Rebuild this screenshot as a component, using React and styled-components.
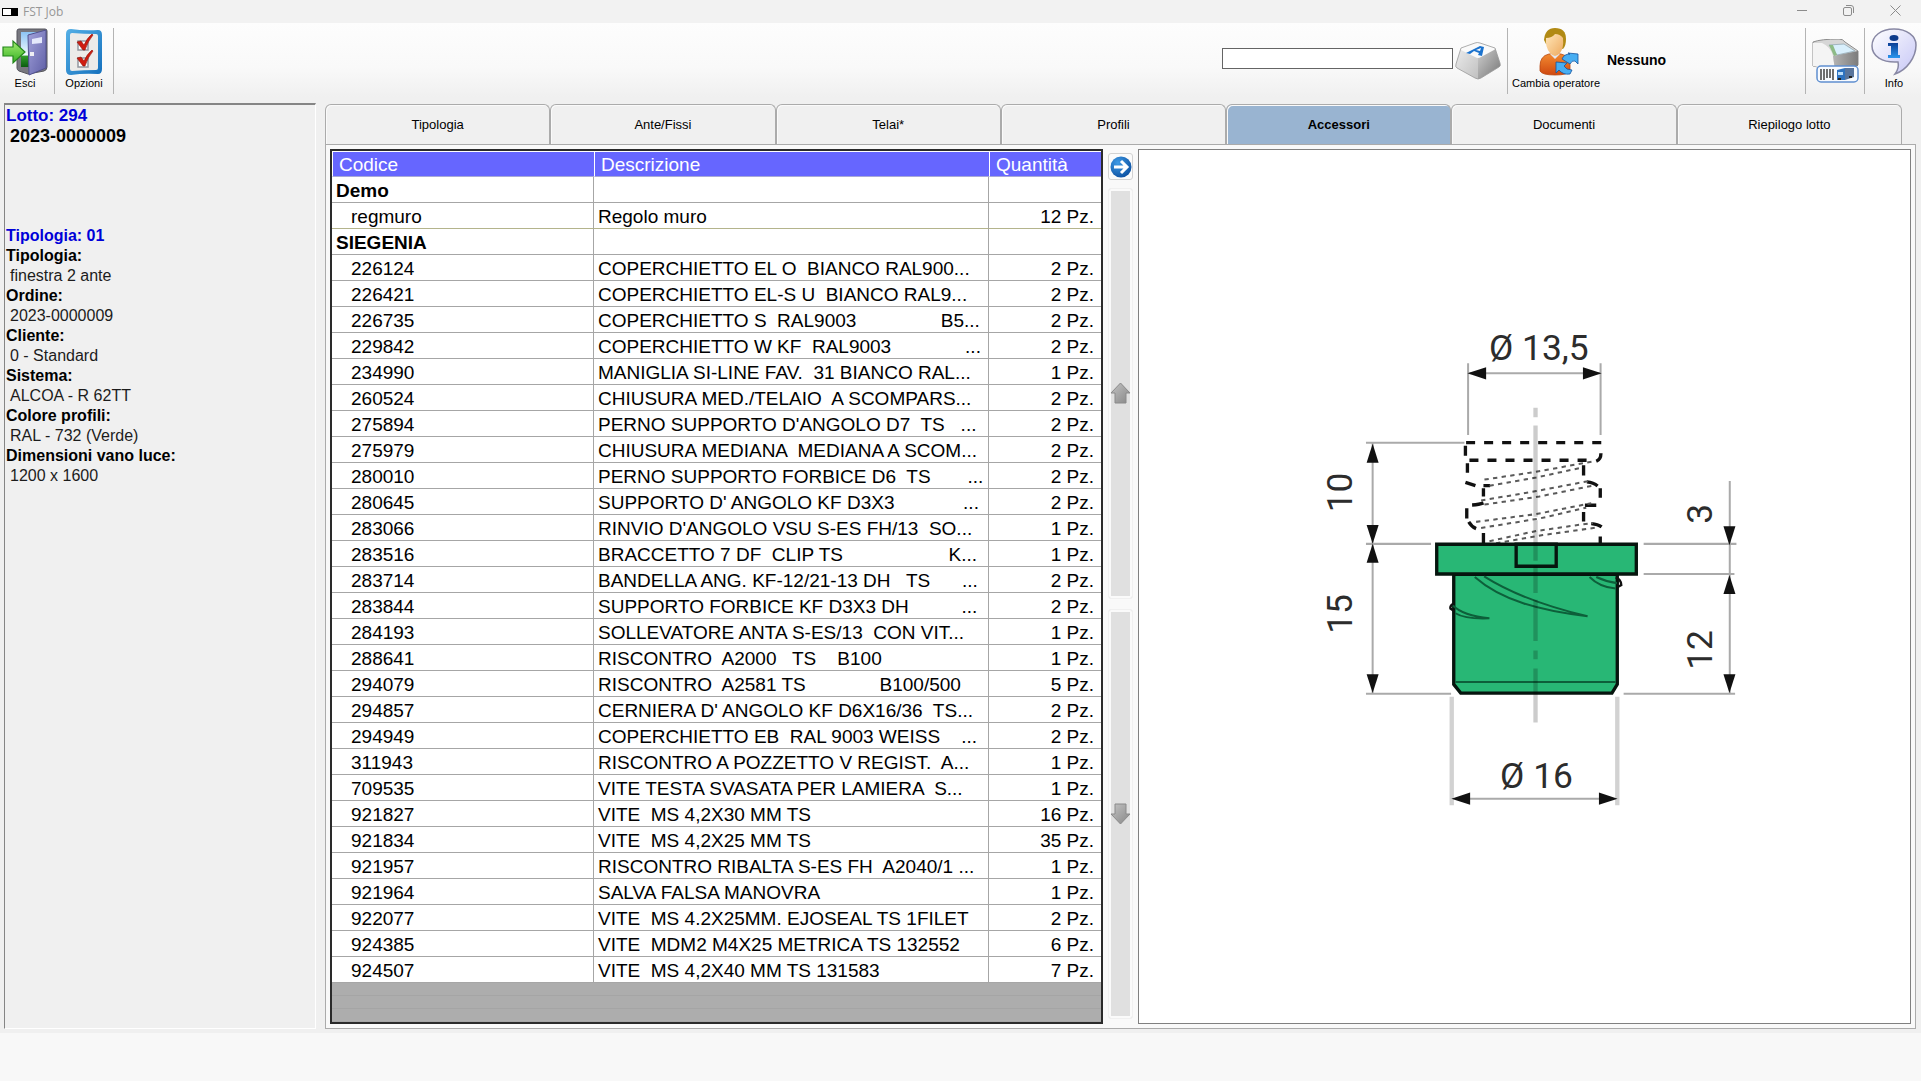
import React, { useState } from "react";
import styled, { createGlobalStyle } from "styled-components";

const GlobalStyle = createGlobalStyle`
  *, *::before, *::after { box-sizing: border-box; }
  body {
    margin: 0;
    background: #f8f8f8;
    color: #000;
    font-family: "Liberation Sans", Arial, sans-serif;
  }
  button { font: inherit; color: inherit; cursor: pointer; }
`;

const Window = styled.div`
  display: flex;
  flex-direction: column;
  min-height: 100vh;
`;

const TitleBar = styled.header`
  display: flex;
  align-items: center;
  height: 23px;
  padding: 0 12px 0 2px;
  background: #f2f2f2;
`;

const AppMark = styled.span`
  width: 16px;
  height: 8px;
  border: 1px solid #000;
  background: linear-gradient(90deg, #fff 55%, #000 55%);
`;

const Title = styled.h1`
  margin: 0 auto 0 5px;
  font: 400 12px/20px "Open Sans", "Noto Sans", sans-serif;
  color: #969696;
`;

const WindowButtons = styled.div`
  display: flex;
  gap: 20px;
  margin-bottom: 3px;
`;

const WindowButton = styled.button`
  display: grid;
  place-items: center;
  width: 27px;
  height: 20px;
  padding: 0;
  border: 0;
  background: none;
  svg { display: block; }
`;

const Toolbar = styled.div`
  display: flex;
  height: 74px;
  padding: 5px 2px 3px 0;
  background: linear-gradient(#fdfdfd, #f9f9f9 60%, #f0f0f0);
`;

const Separator = styled.span`
  width: 1px;
  margin: 0 4px;
  background: #b4b4b4;
`;

const ToolButton = styled.button`
  display: flex;
  flex-direction: column;
  align-items: center;
  justify-content: ${(p) => (p.$bare ? "center" : "flex-start")};
  width: ${(p) => (p.$wide ? 88 : 50)}px;
  padding: 0;
  border: 0;
  background: none;
  font-size: 11px;
  line-height: 14px;
  white-space: nowrap;
  svg { display: block; flex: none; }
`;

const SearchBox = styled.input`
  align-self: center;
  width: 231px;
  height: 21px;
  margin: 0 0 6px auto;
  padding: 0 4px;
  border: 1px solid #646464;
  border-radius: 0;
  background: #fff;
  font: 13px "Liberation Sans", Arial, sans-serif;
`;

const Operator = styled.strong`
  align-self: center;
  width: 194px;
  margin: 0 0 2px 7px;
  font-size: 14px;
  line-height: 20px;
`;

const Main = styled.main`
  flex: 1;
  display: flex;
  gap: 9px;
  padding: 6px 5px 4px 4px;
  background: #f0f0f0;
`;

const JobPanel = styled.aside`
  flex: none;
  width: 312px;
  padding: 1px;
  border: 1px solid #fff;
  border-top: 2px solid #858585;
  border-left-color: #858585;
  line-height: 20px;
  font-size: 16px;
`;

const LotTitle = styled.h2`
  margin: 0;
  font-size: 17px;
  line-height: 20px;
  color: #0000d8;
`;

const LotNumber = styled.p`
  margin: 0 0 80px;
  padding-left: 4px;
  font-size: 18px;
  font-weight: 700;
`;

const TypeTitle = styled.h3`
  margin: 0;
  font-size: 16px;
  line-height: 20px;
  color: #0000d8;
`;

const Details = styled.dl`
  margin: 0;
  dt { font-weight: 700; }
  dd { margin: 0; padding-left: 4px; color: #1c1c1c; }
`;

const Workspace = styled.section`
  flex: 1;
  min-width: 0;
  display: flex;
  flex-direction: column;
  padding-top: 1px;
`;

const TabList = styled.div`
  display: flex;
  padding-right: 14px;
`;

const Tab = styled.button`
  flex: 1;
  height: 40px;
  padding: 0;
  border: 1px solid #ababab;
  border-bottom: 0;
  border-radius: 6px 6px 0 0;
  background: ${(p) => (p.$active ? "#99b4d1" : "#f0f0f0")};
  box-shadow: inset 1px 1px 0 #fafafa;
  font-size: 13px;
  font-weight: ${(p) => (p.$active ? 700 : 400)};
`;

const TabPage = styled.div`
  flex: 1;
  display: grid;
  grid-template-columns: minmax(0, 1fr) 25px minmax(0, 1fr);
  gap: 5px;
  padding: 4px;
  border: 1px solid #ababab;
  background: #f9f9f9;
`;

const GridFrame = styled.div`
  border: 2px solid #2a2a2a;
  background: repeating-linear-gradient(#adadad 0 12px, #a5a5a5 12px 13px);
`;

const PartsTable = styled.table`
  width: 100%;
  table-layout: fixed;
  border-spacing: 0;
  background: #fff;
  font-size: 19px;
  line-height: 22px;
`;

const HeadCell = styled.th`
  height: 26px;
  padding: 2px 6px 0;
  border: 1px solid #fff;
  border-width: 1px 0 1px 1px;
  border-bottom-color: #a8a8d8;
  background: #6666ff;
  color: #fff;
  font-weight: 400;
  text-align: left;
`;

const Cell = styled.td`
  height: 26px;
  padding: ${(p) => (p.$indent ? "2px 0 0 19px" : "2px 7px 0 4px")};
  border-right: 1px solid #a6a6a6;
  border-bottom: 1px solid ${(p) => (p.$marked ? "#b4b48c" : "#a6a6a6")};
  font-weight: ${(p) => (p.$group ? 700 : 400)};
  text-align: ${(p) => (p.$right ? "right" : "left")};
  white-space: pre;
  overflow: hidden;
  &:last-child { border-right: 0; }
`;

const Pager = styled.div`
  display: flex;
  flex-direction: column;
  padding: 4px 0 5px;
`;

const GoButton = styled.button`
  display: grid;
  place-items: center;
  height: 27px;
  margin-bottom: 8px;
  padding: 0;
  border: 1px solid #d2d2d2;
  border-radius: 3px;
  background: #fbfbfb;
`;

const ScrollButton = styled.button`
  flex: 1;
  display: grid;
  place-items: center;
  padding: 0;
  border: 1px solid #f0f0f0;
  border-radius: 3px;
  background: #e0e0e0;
  box-shadow: inset 0 0 0 2px #fafafa;
  & + & { margin-top: 10px; }
`;

const Preview = styled.figure`
  display: flex;
  margin: 0;
  border: 1px solid #808080;
  background: #fff;
  svg { flex: 1; width: 100%; min-width: 0; }
`;

const StatusStrip = styled.footer`
  height: 49px;
  background: #f8f8f8;
`;

const TABS = ["Tipologia", "Ante/Fissi", "Telai*", "Profili", "Accessori", "Documenti", "Riepilogo lotto"];

const DETAILS = [
  ["Tipologia:", "finestra 2 ante"],
  ["Ordine:", "2023-0000009"],
  ["Cliente:", "0 - Standard"],
  ["Sistema:", "ALCOA - R 62TT"],
  ["Colore profili:", "RAL - 732 (Verde)"],
  ["Dimensioni vano luce:", "1200 x 1600"],
];

const gap = (n) => " ".repeat(n);

const GROUPS = [
  { name: "Demo", parts: [["regmuro", "Regolo muro", 12]] },
  {
    name: "SIEGENIA",
    parts: [
      ["226124", "COPERCHIETTO EL O  BIANCO RAL900...", 2],
      ["226421", "COPERCHIETTO EL-S U  BIANCO RAL9...", 2],
      ["226735", `COPERCHIETTO S  RAL9003${gap(16)}B5...`, 2],
      ["229842", `COPERCHIETTO W KF  RAL9003${gap(14)}...`, 2],
      ["234990", "MANIGLIA SI-LINE FAV.  31 BIANCO RAL...", 1],
      ["260524", "CHIUSURA MED./TELAIO  A SCOMPARS...", 2],
      ["275894", "PERNO SUPPORTO D'ANGOLO D7  TS   ...", 2],
      ["275979", "CHIUSURA MEDIANA  MEDIANA A SCOM...", 2],
      ["280010", `PERNO SUPPORTO FORBICE D6  TS${gap(7)}...`, 2],
      ["280645", `SUPPORTO D' ANGOLO KF D3X3${gap(13)}...`, 2],
      ["283066", "RINVIO D'ANGOLO VSU S-ES FH/13  SO...", 1],
      ["283516", `BRACCETTO 7 DF  CLIP TS${gap(20)}K...`, 1],
      ["283714", `BANDELLA ANG. KF-12/21-13 DH   TS${gap(6)}...`, 2],
      ["283844", `SUPPORTO FORBICE KF D3X3 DH${gap(10)}...`, 2],
      ["284193", "SOLLEVATORE ANTA S-ES/13  CON VIT...", 1],
      ["288641", "RISCONTRO  A2000   TS    B100", 1],
      ["294079", `RISCONTRO  A2581 TS${gap(14)}B100/500`, 5],
      ["294857", "CERNIERA D' ANGOLO KF D6X16/36  TS...", 2],
      ["294949", "COPERCHIETTO EB  RAL 9003 WEISS    ...", 2],
      ["311943", "RISCONTRO A POZZETTO V REGIST.  A...", 1],
      ["709535", "VITE TESTA SVASATA PER LAMIERA  S...", 1],
      ["921827", "VITE  MS 4,2X30 MM TS", 16],
      ["921834", "VITE  MS 4,2X25 MM TS", 35],
      ["921957", "RISCONTRO RIBALTA S-ES FH  A2040/1 ...", 1],
      ["921964", "SALVA FALSA MANOVRA", 1],
      ["922077", "VITE  MS 4.2X25MM. EJOSEAL TS 1FILET", 2],
      ["924385", "VITE  MDM2 M4X25 METRICA TS 132552", 6],
      ["924507", "VITE  MS 4,2X40 MM TS 131583", 7],
    ],
  },
];

const ExitIcon = () => (
  <svg width="46" height="48" viewBox="0 0 46 48" aria-hidden="true">
    <defs>
      <linearGradient id="door" x1="0" x2="1" y1="0" y2="1">
        <stop offset="0" stopColor="#a3a3dc" />
        <stop offset="1" stopColor="#5f5fa6" />
      </linearGradient>
      <linearGradient id="sky" x1="0" x2="0" y1="0" y2="1">
        <stop offset="0" stopColor="#8cc4f4" />
        <stop offset=".65" stopColor="#f2faff" />
        <stop offset=".7" stopColor="#2f9a2a" />
        <stop offset="1" stopColor="#0c5c10" />
      </linearGradient>
      <linearGradient id="go" x1="0" x2="0" y1="0" y2="1">
        <stop offset="0" stopColor="#a4ee70" />
        <stop offset="1" stopColor="#35b024" />
      </linearGradient>
    </defs>
    <path d="M17 1h26q2 0 2 2v36q0 3-3 4l-16 3-9-3q-2-1-2-3V3q0-2 2-2z" fill="#77777f" stroke="#55555d" />
    <path d="M19 4h22v35H19z" fill="url(#sky)" />
    <path d="M26 7 44 2v38l-17 7z" fill="url(#door)" stroke="#50508e" />
    <path d="m30 11 10-2v6l-10 1z" fill="#e4e8fb" />
    <path d="M28 24h4v4h-4z" fill="#eeeef4" />
    <path d="M1 19h10v-6l12 11-12 11v-7H1z" fill="url(#go)" stroke="#23851b" strokeWidth="1.2" />
  </svg>
);

const OptionsIcon = () => (
  <svg width="36" height="48" viewBox="0 0 36 48" aria-hidden="true">
    <defs>
      <linearGradient id="board" x1="0" x2="1" y1="0" y2="1">
        <stop offset="0" stopColor="#55b0e6" />
        <stop offset="1" stopColor="#1470bd" />
      </linearGradient>
    </defs>
    <path d="M5 1q13 2 27 1 4 0 4 5v34q0 5-4 5-14-1-27 1-5 0-5-5V6q0-5 5-5z" fill="url(#board)" />
    <path d="M6 5q12 1 24 1 2 0 2 2v32q0 2-2 2-12 0-24 1-2 0-2-2V7q0-2 2-2z" fill="#ecebe9" />
    <path d="M12 13h10v9H12zM12 30h10v9H12z" fill="#fff" stroke="#9298a0" strokeWidth="1.5" />
    <path d="m11 14 4-1 3 4q3-7 8-11l1 1q-5 6-8 15h-2zM11 30l4-1 3 4q3-7 8-11l1 1q-5 6-8 15h-2z" fill="#cf1c10" stroke="#8c1008" strokeWidth=".6" />
  </svg>
);

const KeyIcon = () => (
  <svg width="46" height="38" viewBox="0 0 46 38" aria-hidden="true">
    <defs>
      <linearGradient id="keyL" x1="0" x2="1" y1="0" y2="1">
        <stop offset="0" stopColor="#ececec" />
        <stop offset="1" stopColor="#c0c0c0" />
      </linearGradient>
      <linearGradient id="keyR" x1="0" x2="1" y1="0" y2="1">
        <stop offset="0" stopColor="#cfcfcf" />
        <stop offset="1" stopColor="#767676" />
      </linearGradient>
    </defs>
    <path d="M6 6 23 15v22q-1 0-3-1L2 26q-2-1-1-4z" fill="url(#keyL)" />
    <path d="M40 6 23 15v22q1 0 3-1l18-11q2-1 1-4z" fill="url(#keyR)" />
    <path d="M6 6 20 1q2-1 5 0l15 5q1 1-1 2l-13 7q-3 2-6 0L6 8q-1-1 0-2z" fill="#fafafa" />
    <path d="M6 6 20 1q2-1 5 0l15 5 5 15q1 3-1 4L26 36q-3 2-6 0L2 26q-2-1-1-4z" fill="none" stroke="#999" strokeWidth=".8" />
    <path d="m11 11 14-7 4 1-2 9-4-1 1-2-5-2-4 3zm10-3 4 1 1-3z" fill="#1c73ce" fillRule="evenodd" />
  </svg>
);

const OperatorIcon = () => (
  <svg width="46" height="48" viewBox="-6 0 46 48" aria-hidden="true">
    <defs>
      <linearGradient id="body" x1="0" x2="0" y1="0" y2="1">
        <stop offset="0" stopColor="#f28a30" />
        <stop offset="1" stopColor="#cf4810" />
      </linearGradient>
      <linearGradient id="face" x1="0" x2="1" y1="0" y2="1">
        <stop offset="0" stopColor="#ffe6b8" />
        <stop offset="1" stopColor="#eda95e" />
      </linearGradient>
    </defs>
    <path d="M1 38q0-10 9-12h12q9 2 9 11v6q-2 4-15 4T1 43z" fill="url(#body)" stroke="#b8480f" strokeWidth=".8" />
    <path d="m11 26 5 5 5-5z" fill="#e4e6ee" />
    <path d="M5 12Q6 0 16 0q11 0 11 11 0 7-3 10L7 16z" fill="#b18a14" />
    <path d="M7 10q6 0 9-4 5 0 8 4 1 10-3 15-5 6-10 0-5-6-4-15z" fill="url(#face)" />
    <path d="M23 31q2-5 8-5l-2-1 10 1v10l-3-3q-3-1-5 3z" fill="#48aef2" stroke="#14539e" strokeWidth=".8" />
    <path d="m17 34 11 1-3 3q2 4 8 4l-2 4q-7 1-11-4l-3 3z" fill="#48aef2" stroke="#14539e" strokeWidth=".8" />
  </svg>
);

const PrinterIcon = () => (
  <svg width="47" height="44" viewBox="0 0 47 44" aria-hidden="true">
    <defs>
      <linearGradient id="side" x1="0" x2="1" y1="0" y2="0">
        <stop offset="0" stopColor="#b4b4b4" />
        <stop offset="1" stopColor="#7c7c7c" />
      </linearGradient>
    </defs>
    <path d="M1 3q8-3 26-3 4 0 6 3l13 9v14L24 32 1 27z" fill="#d6d6d6" stroke="#8c8c8c" />
    <path d="M1 4h9q9 4 11 13l2 14-22-4z" fill="#f4f4f4" />
    <path d="m21 17 25-5v15l-23 4z" fill="url(#side)" />
    <path d="m17 6 15-1 11 7-18 4z" fill="#d8effc" stroke="#8aa0ac" strokeWidth=".7" />
    <path d="m17 6 5 11 3-1-4-10z" fill="#8dbb87" />
    <rect x="5" y="27" width="41" height="16" rx="4" fill="#f8fbff" stroke="#5f8fd0" strokeWidth="1.5" />
    <path d="M9 30v11M12 30v11M15 30v9M18 30v9M21 30v11" stroke="#333" strokeWidth="1.4" />
    <path d="m25 31 8-2v12h-8z" fill="#2d72c0" />
    <path d="M33 29h9v9l-9 3z" fill="#58749c" />
    <path d="M26 33h5v3h-5z" fill="#b9dcfa" />
    <path d="M26 40h3M37 38h3" stroke="#222" strokeWidth="2" />
  </svg>
);

const InfoIcon = () => (
  <svg width="46" height="48" viewBox="0 0 46 48" aria-hidden="true">
    <defs>
      <linearGradient id="bubble" x1="0" x2="1" y1="0" y2="1">
        <stop offset="0" stopColor="#fff" />
        <stop offset="1" stopColor="#c6c6f6" />
      </linearGradient>
      <linearGradient id="letter" x1="0" x2="0" y1="0" y2="1">
        <stop offset="0" stopColor="#0b3f96" />
        <stop offset="1" stopColor="#2a95ee" />
      </linearGradient>
    </defs>
    <path d="M23 1c13 0 22 7 22 16 0 12-9 25-21 29 3-4 4-8 3-12C11 35 1 28 1 18 1 8 10 1 23 1z" fill="url(#bubble)" stroke="#8888a4" strokeWidth="1.5" />
    <ellipse cx="23" cy="10" rx="4.500" ry="3" fill="#0c3a8c" />
    <path d="M17 15h10v12h2v3H17v-3h3v-9h-3z" fill="url(#letter)" />
  </svg>
);

const GoIcon = () => (
  <svg width="22" height="22" viewBox="0 0 22 22" aria-hidden="true">
    <defs>
      <radialGradient id="disc" cx=".35" cy=".3" r=".8">
        <stop offset="0" stopColor="#3f9be6" />
        <stop offset="1" stopColor="#0a4d9e" />
      </radialGradient>
    </defs>
    <circle cx="11" cy="11" r="10.500" fill="url(#disc)" />
    <path d="M4 11h12M11 5l6 6-6 6" fill="none" stroke="#fff" strokeWidth="3" />
  </svg>
);

const ScrollIcon = ({ down }) => (
  <svg width="21" height="22" viewBox="0 0 21 22" aria-hidden="true">
    <defs>
      <linearGradient id="steel" x1="0" x2="1" y1="0" y2="1">
        <stop offset="0" stopColor="#c4c4c4" />
        <stop offset="1" stopColor="#868686" />
      </linearGradient>
    </defs>
    <path
      d={down ? "M5 1h11v10h4l-9.500 10L1 11h4z" : "M5 21h11V11h4L10.500 1 1 11h4z"}
      fill="url(#steel)"
      stroke="#8a8a8a"
    />
  </svg>
);

const DimText = styled.text`
  font-family: Roboto, "Liberation Sans", Arial, sans-serif;
  font-size: 106px;
  text-anchor: middle;
  fill: #2c2c2c;
`;

// Arrow head with its tip on (x, y), pointing in the given direction in degrees from "up".
const Head = ({ x, y, turn }) => (
  <path d="M0 0 18 56H-18z" fill="#111" transform={`translate(${x} ${y}) rotate(${turn})`} />
);

const PartDrawing = () => (
  <svg viewBox="-450 -450 2310 2616" role="img" aria-label="Disegno quotato dell'accessorio">
    <g transform="scale(1 1.014)">
      <g fill="none" stroke="#111" strokeWidth="10">
        <path d="M530 421H936" strokeDasharray="27 27" />
        <path d="M540 473H895" strokeDasharray="27 27" />
        <path d="M528 430v30M534 482v28M528 538l30 10" />
        <path d="M934 452q0 18-14 24M882 488v30" />
        <path d="M582 548l20 0M582 556v24M892 537q20 2 32 12M932 556v28" />
        <path d="M548 605q22-1 34-6M532 615v30M538 655q8 14 22 20" />
        <path d="M886 606h34M882 626v28M905 660q20 2 31 10M932 698v22M582 688v30" />
      </g>
      <g fill="none" stroke="#5a5a5a" strokeWidth="6" strokeDasharray="13 13">
        <path d="M585 530 720 510 915 476M600 548 740 524 880 494" />
        <path d="M575 592 740 564 900 534M585 604 750 580 910 548" />
        <path d="M560 655 740 632 905 600M575 673 750 645 890 613" />
        <path d="M600 712 740 682 910 658M620 718 760 694 920 672" />
      </g>
      <g fill="#28b775" stroke="#06150e" strokeWidth="10">
        <path d="M493 810h490v325l-16 26H514l-21-26z" />
        <path d="M442 721h598v88H442z" />
        <path d="M680 721h120v65H680z" />
      </g>
      <g fill="none" stroke="#0d5f3a" strokeWidth="6">
        <path d="M498 1128h480" />
        <path d="M556 818c80 70 200 100 338 116M584 816c80 50 190 90 310 118" />
        <path d="M900 818c20 20 50 32 78 34M920 818q30 14 62 18M488 900c25 25 65 36 112 40M498 925q30 18 102 15" />
      </g>
      <path d="M978 820q16 4 17 22l-12 6M495 895q-14 6-12 16l12 8" fill="none" stroke="#111" strokeWidth="7" />
      <path
        d="M738 318v28M738 370v270M738 650v120M738 785v80M738 885v122M738 1035v26M738 1088v160"
        fill="none"
        stroke="#000"
        strokeOpacity=".2"
        strokeWidth="13"
      />
      <g fill="none" stroke="#aaa" strokeWidth="6">
        <path d="M536 186v212M933 186v212M540 216h390" />
        <path d="M230 421h295M230 720h195M230 1163h255M250 421v742" />
        <path d="M1062 720h278M1062 809h272M1002 1163h334M1320 534v629" />
        <path d="M540 1473h390" />
      </g>
      <path d="M487 1172v320M983 1172v320" stroke="#d2d2d2" strokeWidth="13" />
      <Head x={534} y={216} turn={-90} />
      <Head x={936} y={216} turn={90} />
      <Head x={486} y={1473} turn={-90} />
      <Head x={984} y={1473} turn={90} />
      <Head x={250} y={424} turn={0} />
      <Head x={250} y={720} turn={180} />
      <Head x={250} y={720} turn={0} />
      <Head x={250} y={1161} turn={180} />
      <Head x={1319} y={724} turn={180} />
      <Head x={1319} y={812} turn={0} />
      <Head x={1319} y={1161} turn={180} />
    </g>
    <DimText x="748" y="179">Ø 13,5</DimText>
    <DimText x="741" y="1462">Ø 16</DimText>
    <DimText transform="translate(188 576) rotate(-90)">10</DimText>
    <DimText transform="translate(188 940) rotate(-90)">15</DimText>
    <DimText transform="translate(1268 640) rotate(-90)">3</DimText>
    <DimText transform="translate(1268 1048) rotate(-90)">12</DimText>
  </svg>
);

export default function App() {
  const [activeTab, setActiveTab] = useState("Accessori");

  return (
    <Window>
      <GlobalStyle />
      <TitleBar>
        <AppMark />
        <Title>FST Job</Title>
        <WindowButtons>
          <WindowButton aria-label="Riduci a icona">
            <svg width="10" height="10" stroke="#8c8c8c"><path d="M0 5.500h10" /></svg>
          </WindowButton>
          <WindowButton aria-label="Ripristina">
            <svg width="11" height="11" fill="none" stroke="#8c8c8c">
              <rect x=".5" y="2.500" width="8" height="8" rx="1.500" />
              <path d="M3 .5h5q2.500 0 2.500 2.500v5" />
            </svg>
          </WindowButton>
          <WindowButton aria-label="Chiudi">
            <svg width="11" height="11" stroke="#8c8c8c"><path d="m.5.5 10 10M10.500.5l-10 10" /></svg>
          </WindowButton>
        </WindowButtons>
      </TitleBar>

      <Toolbar>
        <ToolButton><ExitIcon />Esci</ToolButton>
        <Separator />
        <ToolButton><OptionsIcon />Opzioni</ToolButton>
        <Separator />
        <SearchBox type="text" aria-label="Codice da cercare" />
        <ToolButton $bare aria-label="Tastiera"><KeyIcon /></ToolButton>
        <Separator />
        <ToolButton $wide><OperatorIcon />Cambia operatore</ToolButton>
        <Operator>Nessuno</Operator>
        <Separator />
        <ToolButton $bare aria-label="Stampa etichette"><PrinterIcon /></ToolButton>
        <Separator />
        <ToolButton><InfoIcon />Info</ToolButton>
      </Toolbar>

      <Main>
        <JobPanel>
          <LotTitle>Lotto: 294</LotTitle>
          <LotNumber>2023-0000009</LotNumber>
          <TypeTitle>Tipologia: 01</TypeTitle>
          <Details>
            {DETAILS.map(([label, value]) => (
              <React.Fragment key={label}>
                <dt>{label}</dt>
                <dd>{value}</dd>
              </React.Fragment>
            ))}
          </Details>
        </JobPanel>

        <Workspace>
          <TabList role="tablist">
            {TABS.map((name) => (
              <Tab
                key={name}
                role="tab"
                aria-selected={name === activeTab}
                $active={name === activeTab}
                onClick={() => setActiveTab(name)}
              >
                {name}
              </Tab>
            ))}
          </TabList>

          <TabPage role="tabpanel">
            <GridFrame>
              <PartsTable>
                <colgroup>
                  <col style={{ width: 262 }} />
                  <col />
                  <col style={{ width: 112 }} />
                </colgroup>
                <thead>
                  <tr>
                    <HeadCell>Codice</HeadCell>
                    <HeadCell>Descrizione</HeadCell>
                    <HeadCell>Quantità</HeadCell>
                  </tr>
                </thead>
                <tbody>
                  {GROUPS.map((group) => (
                    <React.Fragment key={group.name}>
                      <tr>
                        <Cell $group>{group.name}</Cell>
                        <Cell />
                        <Cell />
                      </tr>
                      {group.parts.map(([code, text, count]) => (
                        <tr key={code}>
                          <Cell $indent $marked={code === "regmuro"}>{code}</Cell>
                          <Cell $marked={code === "regmuro"}>{text}</Cell>
                          <Cell $right $marked={code === "regmuro"}>{count} Pz.</Cell>
                        </tr>
                      ))}
                    </React.Fragment>
                  ))}
                </tbody>
              </PartsTable>
            </GridFrame>

            <Pager>
              <GoButton aria-label="Avanti"><GoIcon /></GoButton>
              <ScrollButton aria-label="Scorri su"><ScrollIcon /></ScrollButton>
              <ScrollButton aria-label="Scorri giù"><ScrollIcon down /></ScrollButton>
            </Pager>

            <Preview>
              <PartDrawing />
            </Preview>
          </TabPage>
        </Workspace>
      </Main>
      <StatusStrip />
    </Window>
  );
}
